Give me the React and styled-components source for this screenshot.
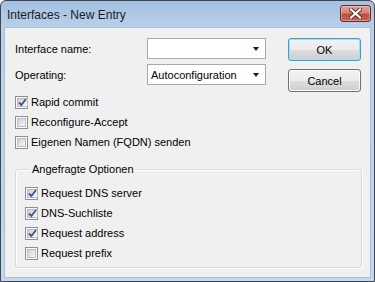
import styled, { createGlobalStyle } from 'styled-components';

const GlobalStyle = createGlobalStyle`
  html, body { margin: 0; padding: 0; background: #ffffff; }
  body { font-family: "Liberation Sans", Arial, sans-serif; }
  * { box-sizing: border-box; }
`;

const Window = styled.div`
  width: 375px;
  height: 282px;
  display: flex;
  flex-direction: column;
  border: 1px solid #3f4650;
  border-radius: 6px 6px 0 0;
  padding: 0 3px 3px 3px;
  background: linear-gradient(180deg, #a4c1e1 0px, #b9d0ea 27px, #c3d7ee 100%);
  overflow: hidden;
`;

const TitleBar = styled.div`
  height: 26px;
  flex: none;
  display: flex;
  justify-content: space-between;
  align-items: flex-start;
`;

const Title = styled.span`
  font-size: 12px;
  color: #1b1b1b;
  margin: 7px 0 0 3px;
  line-height: 14px;
`;

const CloseButton = styled.div`
  width: 31px;
  height: 17px;
  margin-top: 4px;
  border: 1px solid #6a2a2a;
  border-radius: 3px;
  background: linear-gradient(180deg, #e3a190 0%, #d58572 45%, #c0503c 55%, #c8624e 100%);
  display: flex;
  align-items: center;
  justify-content: center;
  box-shadow: inset 0 0 0 1px rgba(255, 255, 255, 0.35);
`;

const Client = styled.div`
  flex: 1;
  background: #f0f0f0;
  border: 1px solid #a8bfdb;
  padding: 10px 0 0 10px;
  display: flex;
  flex-direction: column;
`;

const TopSection = styled.div`
  display: flex;
  align-items: flex-start;
`;

const FormColumn = styled.div`
  width: 251px;
  display: flex;
  flex-direction: column;
  gap: 5px;
`;

const FieldRow = styled.div`
  display: flex;
  align-items: center;
  height: 21px;
`;

const Label = styled.span`
  width: 132px;
  font-size: 11px;
  color: #000;
`;

const Combo = styled.div`
  width: 119px;
  height: 21px;
  border: 1px solid #a9a9a9;
  background: #fff;
  display: flex;
  align-items: center;
  justify-content: space-between;
  padding: 0 6px 0 3px;
  font-size: 11px;
  color: #000;
`;

const Arrow = styled.span`
  width: 0;
  height: 0;
  border-left: 3.5px solid transparent;
  border-right: 3.5px solid transparent;
  border-top: 4px solid #101a5c;
  margin-top: 1px;
`;

const ButtonColumn = styled.div`
  margin-left: 22px;
  display: flex;
  flex-direction: column;
  gap: 8px;
`;

const Button = styled.div`
  width: 73px;
  height: 23px;
  border: 1px solid ${p => (p.$default ? '#3c9fd0' : '#707070')};
  border-radius: 3px;
  background: linear-gradient(180deg, #f2f2f2 0%, #ebebeb 50%, #dddddd 51%, #cfcfcf 100%);
  box-shadow: inset 0 0 0 1px ${p => (p.$default ? '#9ee0fb' : '#fcfcfc')};
  font-size: 11px;
  color: #000;
  display: flex;
  align-items: center;
  justify-content: center;
`;

const CheckList = styled.div`
  display: flex;
  flex-direction: column;
  gap: 7px;
  margin-top: ${p => p.$top || 0}px;
`;

const CheckRow = styled.label`
  display: flex;
  align-items: center;
  height: 13px;
  line-height: 13px;
  font-size: 11px;
  color: #000;
  gap: 3px;
`;

const Box = styled.span`
  width: 13px;
  height: 13px;
  flex: none;
  border: 1px solid #8e8f8f;
  background: #fff;
  padding: 1px;
  display: flex;
`;

const BoxInner = styled.span`
  flex: 1;
  background: linear-gradient(135deg, #cbcfd5 0%, #e4e6e9 55%, #f7f7f7 100%);
  border: 1px solid #b9bcc2;
  display: flex;
  align-items: center;
  justify-content: center;
`;

const Group = styled.fieldset`
  margin: 14px 0 0 0;
  width: 347px;
  border: 1px solid #d3dbe2;
  border-radius: 3px;
  box-shadow: inset 1px 1px 0 #ffffff, 1px 1px 0 #ffffff;
  padding: 11px 0 7px 9px;
`;

const Legend = styled.legend`
  font-size: 11px;
  line-height: 13px;
  padding: 0 2px;
  margin-left: 5px;
  color: #000;
`;

const Checkbox = ({ checked, children }) => (
  <CheckRow>
    <Box>
      <BoxInner>
        {checked && (
          <svg width="9" height="9" viewBox="0 0 9 9">
            <path d="M1 4.5 L3.3 7 L8 1" fill="none" stroke="#3f5a94" strokeWidth="1.9" />
          </svg>
        )}
      </BoxInner>
    </Box>
    {children}
  </CheckRow>
);

export default function App() {
  return (
    <>
      <GlobalStyle />
      <Window>
        <TitleBar>
          <Title>Interfaces - New Entry</Title>
          <CloseButton>
            <svg width="13" height="11" viewBox="0 0 13 11">
              <path d="M2 1.5 L11 9.5 M11 1.5 L2 9.5" stroke="#5a2a2a" strokeWidth="4" strokeLinecap="square" />
              <path d="M2 1.5 L11 9.5 M11 1.5 L2 9.5" stroke="#ffffff" strokeWidth="2.2" strokeLinecap="square" />
            </svg>
          </CloseButton>
        </TitleBar>
        <Client>
          <TopSection>
            <FormColumn>
              <FieldRow>
                <Label>Interface name:</Label>
                <Combo>
                  <span />
                  <Arrow />
                </Combo>
              </FieldRow>
              <FieldRow>
                <Label>Operating:</Label>
                <Combo>
                  <span>Autoconfiguration</span>
                  <Arrow />
                </Combo>
              </FieldRow>
              <CheckList $top={6}>
                <Checkbox checked>Rapid commit</Checkbox>
                <Checkbox>Reconfigure-Accept</Checkbox>
                <Checkbox>Eigenen Namen (FQDN) senden</Checkbox>
              </CheckList>
            </FormColumn>
            <ButtonColumn>
              <Button $default>OK</Button>
              <Button>Cancel</Button>
            </ButtonColumn>
          </TopSection>
          <Group>
            <Legend>Angefragte Optionen</Legend>
            <CheckList>
              <Checkbox checked>Request DNS server</Checkbox>
              <Checkbox checked>DNS-Suchliste</Checkbox>
              <Checkbox checked>Request address</Checkbox>
              <Checkbox>Request prefix</Checkbox>
            </CheckList>
          </Group>
        </Client>
      </Window>
    </>
  );
}
